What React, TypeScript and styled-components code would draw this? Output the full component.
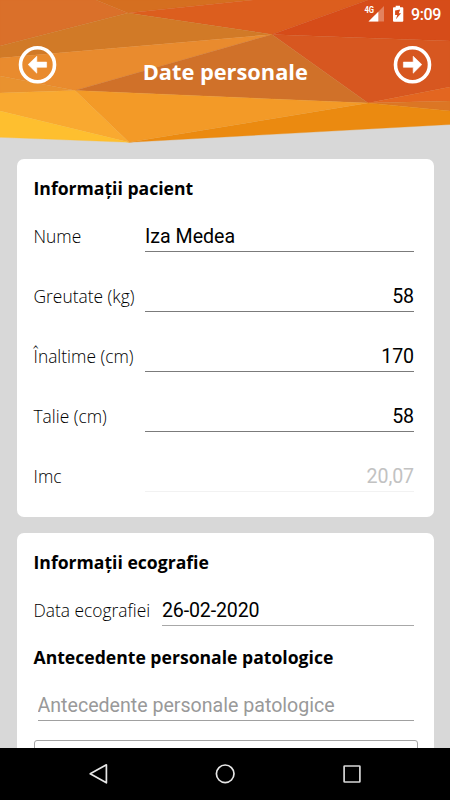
import React from 'react';
import styled, { createGlobalStyle } from 'styled-components';

const GlobalStyle = createGlobalStyle`
  * { box-sizing: border-box; }
  body { margin: 0; background: #d8d8d8; }
  h1, h2 { margin: 0; }
`;

const Screen = styled.div`
  width: 450px;
  height: 800px;
  display: flex;
  flex-direction: column;
  overflow: hidden;
  background: #d8d8d8;
  color: #000;
  font-family: 'Open Sans', sans-serif;
`;

const Header = styled.header`
  position: relative;
  flex: none;
  height: 143px;
`;

const Mosaic = styled.svg`
  position: absolute;
  inset: 0;
  width: 100%;
  height: 100%;
`;

const StatusBar = styled.div`
  position: relative;
  height: 28px;
  display: flex;
  align-items: center;
  justify-content: flex-end;
  padding-right: 9px;
  svg { display: block; }
`;

const Clock = styled.span`
  margin-left: 7px;
  width: 30px;
  white-space: nowrap;
  font: 500 16px/28px Roboto, sans-serif;
  letter-spacing: -0.35px;
  padding-top: 1px;
  color: #fff;
`;

const TitleBar = styled.div`
  position: relative;
  display: flex;
  align-items: flex-start;
  justify-content: space-between;
  padding: 17px 17.5px 0 18px;
`;

const Title = styled.h1`
  color: #fff;
  font-size: 21.8px;
  line-height: 30px;
  font-weight: 700;
  padding-top: 12px;
  white-space: nowrap;
`;

const RoundButton = styled.button`
  border: 0;
  padding: 0;
  width: 39px;
  height: 39px;
  background: none;
  svg { display: block; }
`;

const Content = styled.main`
  flex: 1;
  min-height: 0;
  overflow: hidden;
  padding: 16px 16px 0 16.5px;
  display: flex;
  flex-direction: column;
  gap: 16px;
`;

const Card = styled.section<{ $height: number }>`
  flex: none;
  height: ${p => p.$height}px;
  padding: 17px 20px 0 17px;
  background: #fff;
  border-radius: 7px;
`;

const SectionTitle = styled.h2<{ $spaced?: boolean }>`
  font-size: 17.6px;
  line-height: 24px;
  font-weight: 700;
  white-space: nowrap;
  margin-top: ${p => (p.$spaced ? 19 : 0)}px;
`;

const Row = styled.label<{ $gap: number }>`
  display: flex;
  height: 34px;
  margin-top: ${p => p.$gap}px;
`;

const Label = styled.span<{ $width: number }>`
  flex: none;
  width: ${p => p.$width}px;
  font-size: 17.4px;
  font-weight: 300;
  line-height: 37px;
  white-space: nowrap;
`;

const Field = styled.input<{ $align?: 'right'; $line?: string; $indent?: number; $tracking?: number }>`
  flex: 1;
  min-width: 0;
  height: 34px;
  margin: 0 0 0 ${p => p.$indent ?? 0}px;
  padding: 3px 0 0;
  border: 0;
  border-radius: 0;
  border-bottom: 1px solid ${p => p.$line ?? '#7b7b7b'};
  background: none;
  color: #000;
  font: 400 19.6px/30px Roboto, sans-serif;
  letter-spacing: ${p => p.$tracking ?? 0}px;
  text-align: ${p => p.$align ?? 'left'};
  outline: none;
  &:disabled { color: #c2c2c2; }
  &::placeholder { color: #999; opacity: 1; }
`;

const OutlinedBox = styled.div`
  height: 60px;
  margin: 19px -4px 0 0;
  border: 1px solid #a5a5a5;
  border-radius: 3px;
`;

const NavBar = styled.nav`
  flex: none;
  height: 52px;
  background: #000;
  display: flex;
  align-items: center;
  justify-content: space-between;
  padding: 0 86px 0 86px;
  svg { display: block; }
`;

const facets: [string, string][] = [
  ['#da702a', '0,0 96,0 128,13 0,46'],
  ['#d56f20', '96,0 253,0 128,13'],
  ['#dc5e1e', '128,13 253,0 368,0 272,34.5'],
  ['#d64c19', '272,34.5 368,0 450,0 450,41'],
  ['#d75720', '272,34.5 450,41 450,87 368,103'],
  ['#e36620', '368,103 450,87 450,101'],
  ['#dc7624', '368,103 450,101 450,111'],
  ['#eb8a10', '368,103 450,111 450,124.5 129,142.3'],
  ['#d17a27', '0,46 128,13 272,34.5 0,58'],
  ['#e98b2e', '0,58 272,34.5 75,90.5 0,76'],
  ['#e9922f', '0,76 75,90.5 0,93'],
  ['#d07129', '75,90.5 272,34.5 368,103'],
  ['#f39a27', '75,90.5 368,103 129,142.3'],
  ['#f9a930', '0,93 75,90.5 129,142.3 0,111'],
  ['#febf2f', '0,111 129,142.3 0,137.3'],
];

const CircleArrow = ({ right }: { right?: boolean }) => (
  <svg width="39" height="39" viewBox="0 0 39 39">
    <circle cx="19.5" cy="19.7" r="17" fill="none" stroke="#fff" strokeWidth="3.6" />
    <path
      transform={right ? 'translate(39 0)scale(-1 1)' : undefined}
      d="M10.2 19.6L18.8 11.2V17.1H28.6V22.3H18.8V28.2Z"
      fill="#fff"
      stroke="#fff"
      strokeWidth=".6"
      strokeLinejoin="round"
    />
  </svg>
);

const measures = [
  { label: 'Greutate (kg)', value: '58' },
  { label: 'Înaltime (cm)', value: '170' },
  { label: 'Talie (cm)', value: '58' },
];

export default function App() {
  return (
    <Screen>
      <GlobalStyle />
      <Header>
        <Mosaic viewBox="0 0 450 143">
          {facets.map(([color, points]) => (
            <polygon key={points} points={points} fill={color} stroke={color} strokeWidth=".3" />
          ))}
        </Mosaic>
        <StatusBar>
          <svg width="41" height="28" viewBox="0 0 41 28">
            <path d="M21 6V21.5H5.5Z" fill="#fff" opacity=".3" />
            <path d="M15.3 11.7V21.5H5.5Z" fill="#fff" />
            <text x="1.4" y="12.7" fontFamily="Roboto" fontSize="8.4" fontWeight="700" fill="#fff" textLength="9.6" lengthAdjust="spacingAndGlyphs">4G</text>
            <path
              fillRule="evenodd"
              fill="#fff"
              d="M30.8 7.2H32.7V5.8H37V7.2H39.3Q40.3 7.2 40.3 8.2V20.8Q40.3 21.8 39.3 21.8H31Q30 21.8 30 20.8V8.2Q30 7.2 30.8 7.2ZM37.2 9.4L32.1 10.6V15.1H34.3L32.9 19.2L38.1 13.2H35.8Z"
            />
          </svg>
          <Clock>9:09</Clock>
        </StatusBar>
        <TitleBar>
          <RoundButton aria-label="Înapoi"><CircleArrow /></RoundButton>
          <Title>Date personale</Title>
          <RoundButton aria-label="Înainte"><CircleArrow right /></RoundButton>
        </TitleBar>
      </Header>
      <Content>
        <Card $height={358}>
          <SectionTitle>Informații pacient</SectionTitle>
          <Row $gap={18}>
            <Label $width={111.5}>Nume</Label>
            <Field defaultValue="Iza Medea" />
          </Row>
          {measures.map(m => (
            <Row key={m.label} $gap={26}>
              <Label $width={111.5}>{m.label}</Label>
              <Field $align="right" $tracking={-0.1} defaultValue={m.value} />
            </Row>
          ))}
          <Row $gap={26}>
            <Label $width={111.5}>Imc</Label>
            <Field $align="right" $line="#f2f2f2" $tracking={-0.1} disabled defaultValue="20,07" />
          </Row>
        </Card>
        <Card $height={400}>
          <SectionTitle>Informații ecografie</SectionTitle>
          <Row $gap={18}>
            <Label $width={128.5}>Data ecografiei</Label>
            <Field $line="#a8a8a8" $tracking={-0.15} defaultValue="26-02-2020" />
          </Row>
          <SectionTitle $spaced>Antecedente personale patologice</SectionTitle>
          <Row $gap={18}>
            <Field $line="#a0a0a0" $indent={4} placeholder="Antecedente personale patologice" />
          </Row>
          <OutlinedBox />
        </Card>
      </Content>
      <NavBar>
        <svg width="24" height="24" viewBox="0 0 24 24">
          <path d="M4.2 11.8L20.4 2.8V20.8Z" fill="none" stroke="#e6e6e6" strokeWidth="1.7" strokeLinejoin="round" />
        </svg>
        <svg width="24" height="24" viewBox="0 0 24 24">
          <circle cx="12.2" cy="11.8" r="8.8" fill="none" stroke="#e6e6e6" strokeWidth="1.7" />
        </svg>
        <svg width="24" height="24" viewBox="0 0 24 24">
          <rect x="4.1" y="4" width="15.8" height="16" rx=".6" fill="none" stroke="#d8d8d8" strokeWidth="1.7" />
        </svg>
      </NavBar>
    </Screen>
  );
}
